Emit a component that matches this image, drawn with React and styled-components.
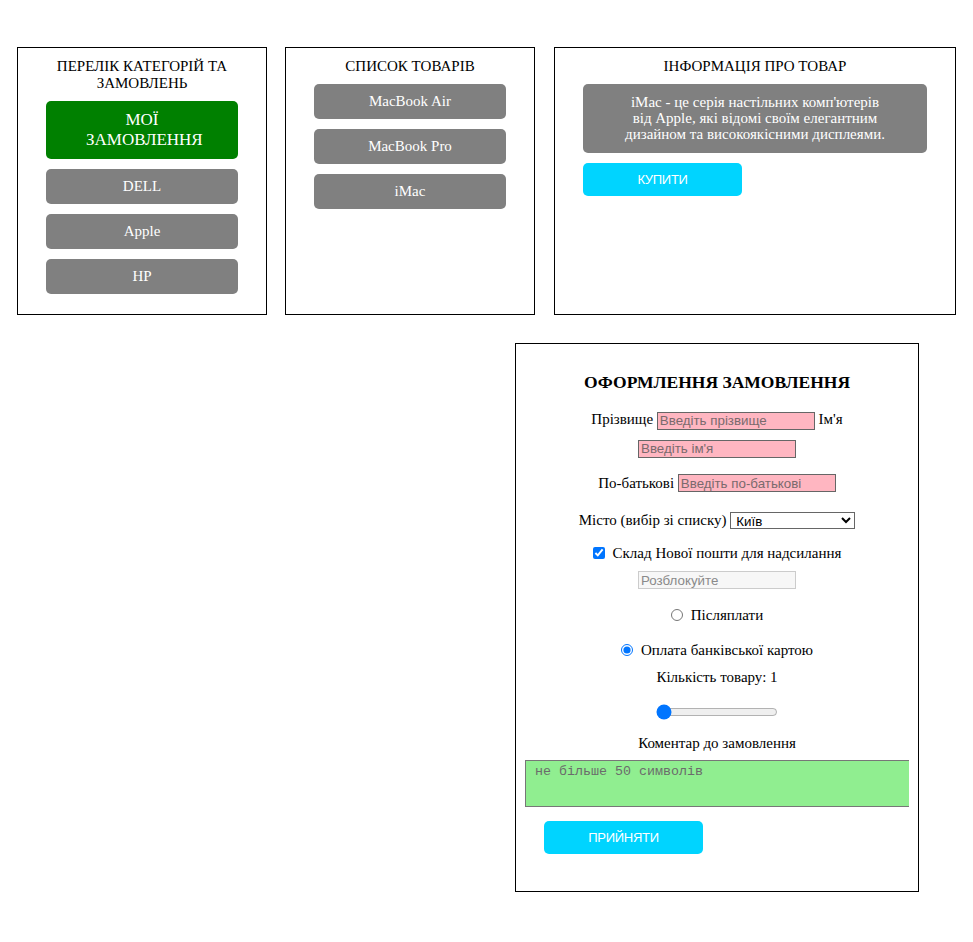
import React from 'react';
import styled, { createGlobalStyle } from 'styled-components';

const GlobalStyle = createGlobalStyle`
  body {
    margin: 0;
    background: #fff;
    font-family: "Liberation Serif", "Times New Roman", serif;
    color: #000;
  }
`;

const categories = ['DELL', 'Apple', 'HP'];
const products = ['MacBook Air', 'MacBook Pro', 'iMac'];

const App = () => {
    return (
        <Page>
            <GlobalStyle />
            <TopRow>
                <Panel $width={250}>
                    <PanelTitle>ПЕРЕЛІК КАТЕГОРІЙ ТА ЗАМОВЛЕНЬ</PanelTitle>
                    <ButtonList>
                        <MenuButton $green>МОЇ ЗАМОВЛЕННЯ</MenuButton>
                        {categories.map((c) => (
                            <MenuButton key={c}>{c}</MenuButton>
                        ))}
                    </ButtonList>
                </Panel>

                <Panel $width={250}>
                    <PanelTitle>СПИСОК ТОВАРІВ</PanelTitle>
                    <ButtonList>
                        {products.map((p) => (
                            <MenuButton key={p}>{p}</MenuButton>
                        ))}
                    </ButtonList>
                </Panel>

                <InfoPanel $width={402}>
                    <PanelTitle>ІНФОРМАЦІЯ ПРО ТОВАР</PanelTitle>
                    <InfoBox>
                        iMac - це серія настільних комп'ютерів
                        <br />
                        від Apple, які відомі своїм елегантним
                        <br />
                        дизайном та високоякісними дисплеями.
                    </InfoBox>
                    <CyanButton>КУПИТИ</CyanButton>
                </InfoPanel>
            </TopRow>

            <FormRow>
                <OrderForm>
                    <FormTitle>ОФОРМЛЕННЯ ЗАМОВЛЕННЯ</FormTitle>

                    <NameLine>
                        Прізвище <PinkInput placeholder="Введіть прізвище" /> Ім'я{' '}
                        <PinkInput placeholder="Введіть ім'я" />
                    </NameLine>

                    <Row $mt={12}>
                        По-батькові&nbsp;<PinkInput placeholder="Введіть по-батькові" />
                    </Row>

                    <Row $mt={17}>
                        Місто (вибір зі списку)&nbsp;
                        <CitySelect defaultValue="Київ">
                            <option>Київ</option>
                            <option>Львів</option>
                            <option>Одеса</option>
                            <option>Харків</option>
                        </CitySelect>
                    </Row>

                    <Row $mt={13}>
                        <Check type="checkbox" defaultChecked />
                        Склад Нової пошти для надсилання
                    </Row>

                    <Row $mt={7}>
                        <LockedInput placeholder="Розблокуйте" disabled />
                    </Row>

                    <Row $mt={15}>
                        <Check type="radio" name="pay" />
                        Післяплати
                    </Row>

                    <Row $mt={15}>
                        <Check type="radio" name="pay" defaultChecked />
                        Оплата банківської картою
                    </Row>

                    <Row $mt={7}>Кількість товару: 1</Row>

                    <Row $mt={15}>
                        <Slider type="range" min={1} max={10} defaultValue={1} />
                    </Row>

                    <Row $mt={11}>Коментар до замовлення</Row>

                    <CommentBox>
                        <Comment placeholder="не більше 50 символів" maxLength={50} />
                    </CommentBox>

                    <SubmitWrap>
                        <CyanButton>ПРИЙНЯТИ</CyanButton>
                    </SubmitWrap>
                </OrderForm>
            </FormRow>
        </Page>
    );
};

export default App;

const Page = styled.div`
  padding: 47px 17px 40px;
`;

const TopRow = styled.div`
  display: flex;
  align-items: stretch;
  gap: 18px;
`;

const Panel = styled.section`
  box-sizing: border-box;
  width: ${(p) => p.$width}px;
  border: 1px solid #000;
  padding: 10px 28px 20px;
`;

const InfoPanel = styled(Panel)`
  margin-left: 1px;
`;

const PanelTitle = styled.div`
  font-size: 15px;
  line-height: 17px;
  text-align: center;
  margin-bottom: 9px;
`;

const ButtonList = styled.div`
  display: flex;
  flex-direction: column;
  gap: 10px;
`;

const MenuButton = styled.button`
  box-sizing: border-box;
  width: 100%;
  border: none;
  border-radius: 5px;
  padding: ${(p) => (p.$green ? '9px 40px' : '9px 10px')};
  background: ${(p) => (p.$green ? '#008000' : '#808080')};
  color: #fff;
  font-family: "Liberation Serif", "Times New Roman", serif;
  font-size: ${(p) => (p.$green ? '17px' : '15px')};
  line-height: ${(p) => (p.$green ? '20px' : '17px')};
  cursor: pointer;
`;

const InfoBox = styled.div`
  background: #808080;
  color: #fff;
  border-radius: 5px;
  padding: 10px 10px 11px;
  font-size: 15px;
  line-height: 16px;
  text-align: center;
`;

const CyanButton = styled.button`
  display: block;
  box-sizing: border-box;
  width: 159px;
  height: 33px;
  margin-top: 10px;
  border: none;
  border-radius: 5px;
  background: #00d4ff;
  color: #fff;
  font-family: "Liberation Sans", Arial, sans-serif;
  font-size: 13px;
  letter-spacing: -0.3px;
  cursor: pointer;
`;

const FormRow = styled.div`
  display: flex;
  justify-content: flex-end;
  padding-right: 37px;
  margin-top: 28px;
`;

const OrderForm = styled.form`
  box-sizing: border-box;
  width: 404px;
  border: 1px solid #000;
  padding: 10px 9px 10px;
  font-size: 15px;
`;

const FormTitle = styled.h3`
  margin: 17px 0 0;
  font-size: 17.5px;
  line-height: 22px;
  font-weight: bold;
  text-align: center;
`;

const NameLine = styled.p`
  margin: 12px 0 0;
  line-height: 28px;
  text-align: center;
`;

const Row = styled.div`
  display: flex;
  justify-content: center;
  align-items: center;
  height: 20px;
  margin-top: ${(p) => p.$mt}px;
  white-space: nowrap;
`;

const fieldText = `
  font-family: "Liberation Sans", Arial, sans-serif;
  font-size: 13.33px;
`;

const PinkInput = styled.input`
  ${fieldText}
  box-sizing: border-box;
  width: 158px;
  height: 18px;
  padding: 0 2px;
  border: 1px solid #666;
  background: #ffb6c1;
  vertical-align: middle;
  outline: none;

  &::placeholder {
    color: #7a6a6d;
  }
`;

const LockedInput = styled(PinkInput)`
  border-color: #ccc;
  background: #f7f7f7;

  &::placeholder {
    color: #8a8a8a;
  }
`;

const CitySelect = styled.select`
  ${fieldText}
  box-sizing: border-box;
  width: 125px;
  height: 17px;
  padding: 0 0 0 1px;
  border: 1px solid #666;
  border-radius: 0;
  background: #fff;
  color: #000;
`;

const Check = styled.input`
  margin: 0 8px 0 0;
  width: 12px;
  height: 12px;
`;

const Slider = styled.input`
  width: 122px;
  margin: 0;
`;

const CommentBox = styled.div`
  margin-top: 7px;
  overflow: hidden;
`;

const Comment = styled.textarea`
  display: block;
  box-sizing: border-box;
  width: 430px;
  height: 47px;
  padding: 3px 9px;
  border: 1px solid #777;
  background: #90ee90;
  font-family: "Liberation Mono", "Courier New", monospace;
  font-size: 13.33px;
  resize: none;

  &::placeholder {
    color: #6b6b6b;
  }
`;

const SubmitWrap = styled.div`
  padding: 4px 0 27px 19px;
`;
